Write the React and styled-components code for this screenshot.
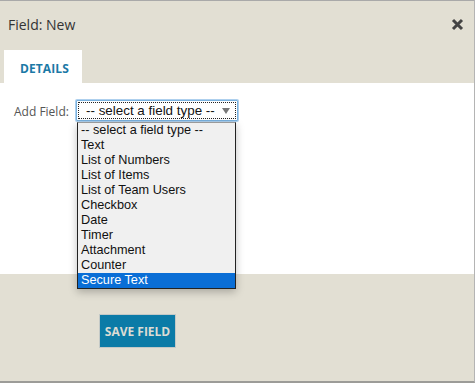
import React from "react";
import styled, { createGlobalStyle } from "styled-components";

const Global = createGlobalStyle`
  html, body { margin: 0; padding: 0; background: #ffffff; }
  body { font-family: "Open Sans", "DejaVu Sans", sans-serif; }
  * { box-sizing: border-box; }
`;

const Dialog = styled.div`
  position: relative;
  width: 475px;
  height: 383px;
  display: flex;
  flex-direction: column;
  border-top: 1px solid #a9a9a9;
  border-right: 1px solid #b4b4b4;
  border-bottom: 2px solid #9c9c98;
  background: #e2dfd3;
`;

const Header = styled.div`
  background: #e2dfd3;
  display: flex;
  flex-direction: column;
`;

const TitleRow = styled.div`
  height: 49px;
  display: flex;
  align-items: center;
  justify-content: space-between;
  padding: 0 10px 0 8px;
`;

const Title = styled.h1`
  margin: 0;
  font-size: 14px;
  font-weight: 400;
  color: #333333;
  line-height: 1;
  margin-top: -1px;
`;

const Close = styled.button`
  border: 0;
  background: none;
  padding: 0;
  width: 14px;
  height: 14px;
  display: flex;
  align-items: center;
  justify-content: center;
  color: #444444;
  margin-top: -3px;
`;

const Tabs = styled.div`
  display: flex;
  padding-left: 4px;
  height: 33px;
`;

const Tab = styled.div`
  width: 78px;
  background: ${(p) => (p.$active ? "#ffffff" : "transparent")};
  color: #1b79a6;
  font-size: 12px;
  font-weight: 700;
  display: flex;
  align-items: center;
  padding-left: 16px;
  padding-top: 3px;
  letter-spacing: 0.1px;
`;

const Body = styled.div`
  background: #ffffff;
  height: 191px;
  padding: 17px 0 0 14px;
`;

const FieldRow = styled.div`
  display: flex;
  align-items: center;
  gap: 7px;
`;

const Label = styled.label`
  font-size: 12px;
  color: #555555;
  width: 55px;
  padding-top: 1px;
`;

const SelectWrap = styled.div`
  position: relative;
`;

const SelectBox = styled.div`
  width: 162px;
  height: 21px;
  border: 1px solid #79b1de;
  box-shadow: 0 0 0 1px #aed0ee;
  padding: 1px;
  background: #ffffff;
  border-radius: 1px;
`;

const SelectInner = styled.div`
  height: 100%;
  border: 1px dotted #222222;
  display: flex;
  align-items: center;
  justify-content: space-between;
  padding: 0 5px 0 7px;
  font-family: "Liberation Sans", Arial, sans-serif;
  font-size: 13.4px;
  color: #111111;
`;

const Arrow = styled.span`
  width: 0;
  height: 0;
  border-left: 4px solid transparent;
  border-right: 4px solid transparent;
  border-top: 6px solid #777777;
  margin-top: 1px;
`;

const List = styled.ul`
  position: absolute;
  left: 1px;
  top: 22px;
  width: 159px;
  margin: 0;
  padding: 0;
  list-style: none;
  background: #f0f0f0;
  border: 1px solid #222222;
  border-top-color: #9a9a9a;
  box-shadow: 0 3px 8px rgba(0, 0, 0, 0.25);
  font-family: "Liberation Sans", Arial, sans-serif;
  font-size: 12.7px;
  z-index: 2;
`;

const Item = styled.li`
  height: 15px;
  line-height: 15px;
  padding-left: 3px;
  white-space: nowrap;
  color: ${(p) => (p.$selected ? "#ffffff" : "#111111")};
  background: ${(p) => (p.$selected ? "#0a6ed6" : "transparent")};
`;

const Footer = styled.div`
  flex: 1;
  background: #e2dfd3;
  padding: 40px 0 0 99px;
`;

const SaveButton = styled.button`
  width: 77px;
  height: 34px;
  background: #0b7ba7;
  border: 1px solid #c3c9c7;
  color: #dcdcd4;
  font-family: "Open Sans", sans-serif;
  font-size: 12px;
  font-weight: 700;
  padding: 0;
  padding-top: 1px;
  cursor: pointer;
`;

const options = [
  "-- select a field type --",
  "Text",
  "List of Numbers",
  "List of Items",
  "List of Team Users",
  "Checkbox",
  "Date",
  "Timer",
  "Attachment",
  "Counter",
  "Secure Text",
];

export default function App() {
  return (
    <>
      <Global />
      <Dialog>
        <Header>
          <TitleRow>
            <Title>Field: New</Title>
            <Close aria-label="close">
              <svg width="13" height="13" viewBox="0 0 13 13">
                <path
                  d="M2 2 L11 11 M11 2 L2 11"
                  stroke="#444"
                  strokeWidth="3"
                  strokeLinecap="butt"
                />
              </svg>
            </Close>
          </TitleRow>
          <Tabs>
            <Tab $active>DETAILS</Tab>
          </Tabs>
        </Header>
        <Body>
          <FieldRow>
            <Label>Add Field:</Label>
            <SelectWrap>
              <SelectBox>
                <SelectInner>
                  <span>-- select a field type --</span>
                  <Arrow />
                </SelectInner>
              </SelectBox>
              <List>
                {options.map((o) => (
                  <Item key={o} $selected={o === "Secure Text"}>
                    {o}
                  </Item>
                ))}
              </List>
            </SelectWrap>
          </FieldRow>
        </Body>
        <Footer>
          <SaveButton>SAVE FIELD</SaveButton>
        </Footer>
      </Dialog>
    </>
  );
}
